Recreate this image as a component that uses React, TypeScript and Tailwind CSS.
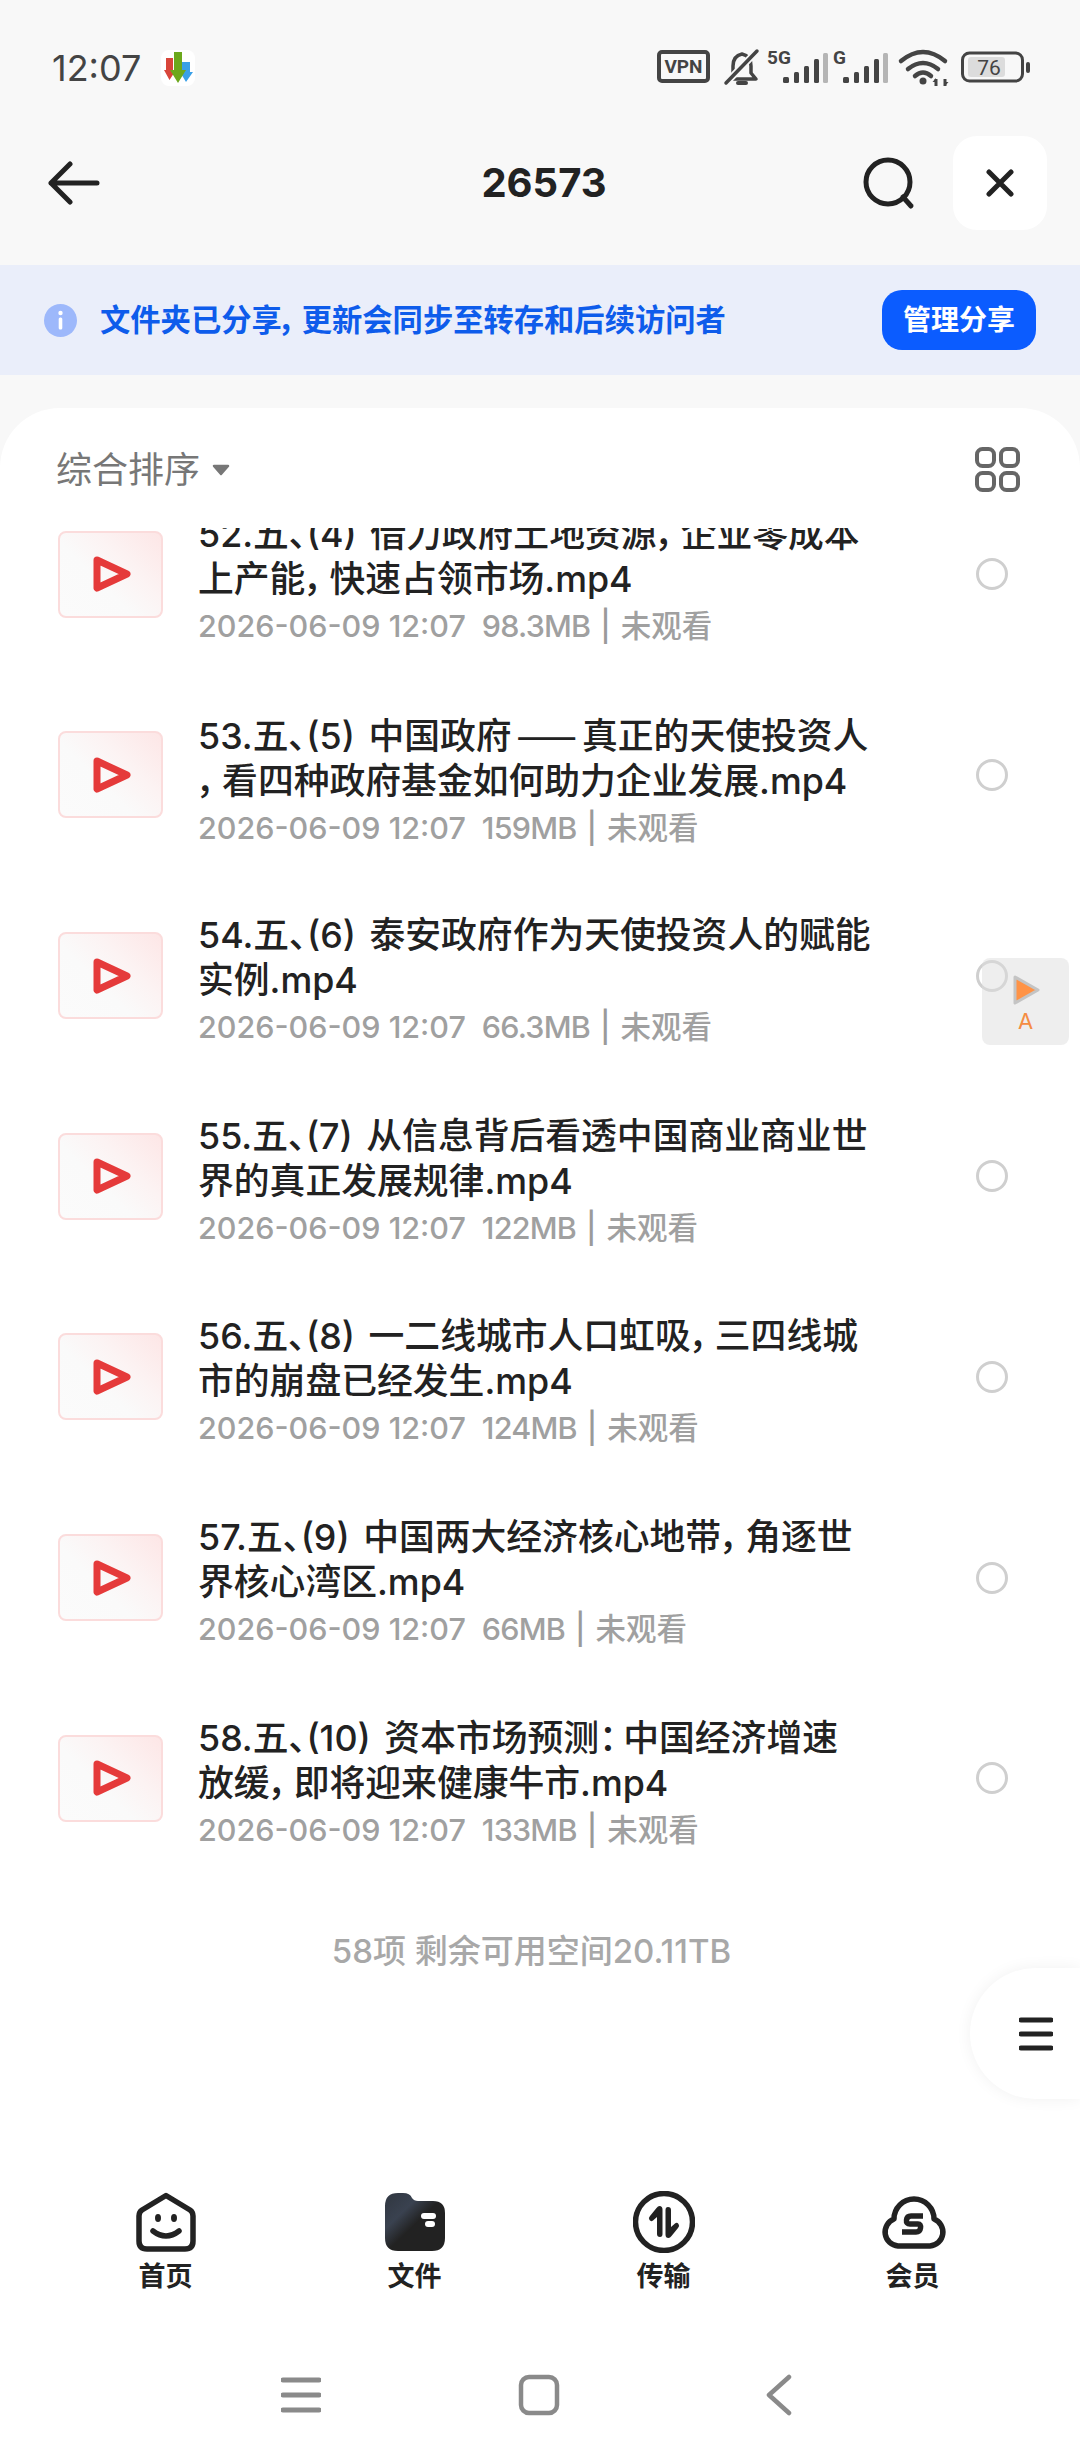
import { Fragment } from "react";

type FileRow = {
  lines: [string, string];
  size: string;
};

const FILES: FileRow[] = [
  { lines: ["52.五、(4) 借力政府土地资源，\u2009企业零成本", "上产能，\u2009快速占领市场.mp4"], size: "98.3MB" },
  { lines: ["53.五、(5) 中国政府——真正的天使投资人", "，\u2009看四种政府基金如何助力企业发展.mp4"], size: "159MB" },
  { lines: ["54.五、(6) 泰安政府作为天使投资人的赋能", "实例.mp4"], size: "66.3MB" },
  { lines: ["55.五、(7) 从信息背后看透中国商业商业世", "界的真正发展规律.mp4"], size: "122MB" },
  { lines: ["56.五、(8) 一二线城市人口虹吸，\u2009三四线城", "市的崩盘已经发生.mp4"], size: "124MB" },
  { lines: ["57.五、(9) 中国两大经济核心地带，\u2009角逐世", "界核心湾区.mp4"], size: "66MB" },
  { lines: ["58.五、(10) 资本市场预测：\u2009中国经济增速", "放缓，\u2009即将迎来健康牛市.mp4"], size: "133MB" },
];

function TitleLine({ text }: { text: string }) {
  // the em dashes have to come from the CJK face to join up
  const parts = text.split("——");
  if (parts.length === 1) return <>{text}</>;
  return (
    <>
      {parts[0]}
      <span className="mx-[5px] font-['Noto_Sans_CJK_SC',sans-serif] [font-feature-settings:normal]">——</span>
      {parts[1]}
    </>
  );
}

function StatusIcons() {
  return (
    <div className="flex items-center text-[#444]">
      <svg width="374" height="56" viewBox="0 -8 374 56" className="block">
        <rect x="2" y="4" width="49" height="29" rx="3" fill="none" stroke="#444" strokeWidth="4" />
        <text x="26.5" y="25" textAnchor="middle" fontSize="19" fontWeight="700" fill="#444" fontFamily="Roboto, sans-serif">VPN</text>
        {/* bell, muted */}
        <path d="M76 28V18Q76 8 85 6Q94 8 94 18V25L99 31H71Z" fill="none" stroke="#444" strokeWidth="3.5" strokeLinejoin="round" />
        <path d="M81 35H89" stroke="#444" strokeWidth="4" strokeLinecap="round" />
        <path d="M69 35L100 3" stroke="#f8f8f8" strokeWidth="7" />
        <path d="M69 35L100 3" stroke="#444" strokeWidth="3.5" strokeLinecap="round" />
        {/* 5G signal */}
        <text x="110" y="16" fontSize="19" fontWeight="700" fill="#444" fontFamily="Roboto, sans-serif">5G</text>
        <rect x="126" y="29" width="6" height="6" rx="1.5" fill="#444" />
        <rect x="137" y="24" width="5" height="11" rx="1.5" fill="#444" />
        <rect x="147" y="18" width="5" height="17" rx="1.5" fill="#444" />
        <rect x="157" y="11" width="5" height="24" rx="1.5" fill="#444" />
        <rect x="166" y="5" width="5" height="30" rx="1.5" fill="#b5b5b5" />
        {/* G signal */}
        <text x="176" y="16" fontSize="19" fontWeight="700" fill="#444" fontFamily="Roboto, sans-serif">G</text>
        <rect x="186" y="29" width="6" height="6" rx="1.5" fill="#444" />
        <rect x="197" y="24" width="5" height="11" rx="1.5" fill="#444" />
        <rect x="207" y="18" width="5" height="17" rx="1.5" fill="#444" />
        <rect x="217" y="11" width="5" height="24" rx="1.5" fill="#444" />
        <rect x="226" y="5" width="5" height="30" rx="1.5" fill="#b5b5b5" />
        {/* wifi */}
        <path d="M244 13Q266 -5 288 13" fill="none" stroke="#444" strokeWidth="4.5" strokeLinecap="round" />
        <path d="M251 21Q266 9 281 21" fill="none" stroke="#444" strokeWidth="4.5" strokeLinecap="round" />
        <path d="M258 28Q266 21 274 28" fill="none" stroke="#444" strokeWidth="4.5" strokeLinecap="round" />
        <circle cx="266" cy="33" r="3.5" fill="#444" />
        <path d="M279 31V38M288 31V38" stroke="#444" strokeWidth="3" />
        <path d="M275.5 34H279V30ZM291.5 34H288V38Z" fill="#444" />
        {/* battery */}
        <rect x="305.5" y="5" width="60" height="28" rx="7" fill="none" stroke="#444" strokeWidth="3" />
        <rect x="311" y="9" width="37" height="20" rx="3" fill="#dcdcdc" />
        <rect x="369" y="14" width="4" height="11" rx="2" fill="#444" />
        <text x="332" y="27" textAnchor="middle" fontSize="21" fill="#444" fontFamily="Roboto, sans-serif">76</text>
      </svg>
    </div>
  );
}

function Thumb() {
  return (
    <div className="flex h-[87px] w-[105px] shrink-0 items-center justify-center rounded-[8px] border-2 border-[#fbdcdc] bg-[linear-gradient(225deg,#fde6e6_0%,#fcf3f3_35%,#fafafa_60%,#fbfbfb_100%)]">
      <svg width="38" height="36" viewBox="0 0 38 36" className="ml-[2px] block">
        <path d="M4 4L34 18L4 32Z" fill="none" stroke="#e53a3a" strokeWidth="7" strokeLinejoin="round" />
      </svg>
    </div>
  );
}

function Row({ file }: { file: FileRow }) {
  return (
    <div className="flex h-[200.67px] items-center pl-[58px]">
      <Thumb />
      <div className="ml-[35px] min-w-0 flex-1 pt-[11px]">
        <p className="whitespace-nowrap text-[35.8px] leading-[45px] font-medium text-[#222] [word-spacing:4px]">
          {file.lines.map((line, i) => (
            <Fragment key={i}>
              <TitleLine text={line} />
              {i === 0 && <br />}
            </Fragment>
          ))}
        </p>
        <p className="mt-[2px] whitespace-nowrap text-[30.5px] leading-[44px] font-medium text-[#a0a0a0]">
          2026-06-09 12:07<span className="ml-[16px] tracking-[-0.8px]">{file.size}</span>
          <span className="mx-[10px] text-[#9a9a9a]">|</span>未观看
        </p>
      </div>
      <div className="mr-[72px] h-[32px] w-[32px] shrink-0 rounded-full border-[3px] border-[#cfcfcf]" />
    </div>
  );
}

function TabItem({ label, icon }: { label: string; icon: React.ReactNode }) {
  return (
    <div className="flex w-[249px] flex-col items-center">
      <div className="flex h-[62px] items-center justify-center">{icon}</div>
      <span className="mt-[6px] text-[27px] leading-[36px] font-bold text-[#222]">{label}</span>
    </div>
  );
}

export default function App() {
  return (
    <div className="relative flex h-[2460px] w-[1080px] flex-col overflow-hidden bg-[#f8f8f8] font-['Inter','Noto_Sans_CJK_SC',sans-serif] [font-feature-settings:'palt']">
      {/* status bar */}
      <div className="flex h-[136px] shrink-0 items-center justify-between pr-[49px] pl-[52px]">
        <div className="flex items-center">
          <span className="text-[36px] leading-none text-[#444]">12:07</span>
          <svg width="34" height="36" viewBox="0 0 34 36" className="ml-[20px] block">
            <rect width="34" height="36" rx="8" fill="#fff" />
            <path d="M5 8H12V20H15L8.5 30L3 20H5Z" fill="#d8453a" />
            <path d="M21 12H29V22H32L25 32L19 22H21Z" fill="#3aa0e8" />
            <path d="M13 2H21V20H25L17 33L9 20H13Z" fill="#6ca81c" />
          </svg>
        </div>
        <StatusIcons />
      </div>

      {/* header */}
      <div className="relative flex h-[94px] shrink-0 items-center justify-between pr-[33px] pl-[48px]">
        <svg width="52" height="46" viewBox="0 0 52 46" className="block">
          <path d="M22 4L3 23L22 42M3 23H49" fill="none" stroke="#222" strokeWidth="5" strokeLinecap="round" strokeLinejoin="round" />
        </svg>
        <span className="absolute left-[4px] w-full text-center text-[40px] leading-none font-bold text-[#222]">26573</span>
        <div className="relative flex items-center gap-[37px]">
          <svg width="54" height="54" viewBox="0 0 54 54" className="block">
            <circle cx="26" cy="26" r="22" fill="none" stroke="#222" strokeWidth="5" />
            <path d="M41 41L49 50" stroke="#222" strokeWidth="5" strokeLinecap="round" />
          </svg>
          <div className="flex h-[94px] w-[94px] items-center justify-center rounded-[24px] bg-white">
            <svg width="28" height="28" viewBox="0 0 28 28" className="block">
              <path d="M3 3L25 25M25 3L3 25" stroke="#222" strokeWidth="5" strokeLinecap="round" />
            </svg>
          </div>
        </div>
      </div>

      {/* shared folder banner */}
      <div className="mt-[35px] flex h-[110px] shrink-0 items-center justify-between bg-[#eaeefa] pr-[44px] pl-[44px]">
        <div className="flex items-center">
          <svg width="33" height="33" viewBox="0 0 33 33" className="block">
            <circle cx="16.5" cy="16.5" r="16.5" fill="#9db8fb" />
            <circle cx="16.5" cy="9" r="2.2" fill="#fff" />
            <rect x="14.7" y="13.5" width="3.6" height="12" rx="1.5" fill="#fff" />
          </svg>
          <span className="ml-[23px] text-[30.3px] leading-none font-bold whitespace-nowrap text-[#0e5ceb]">
            文件夹已分享，{"\u2009"}更新会同步至转存和后续访问者
          </span>
        </div>
        <div className="flex h-[60px] w-[154px] items-center justify-center rounded-[20px] bg-[#0b5cff] text-[28px] font-bold text-white">
          管理分享
        </div>
      </div>

      {/* file panel */}
      <div className="mt-[33px] flex min-h-0 flex-1 flex-col rounded-t-[60px] bg-white">
        <div className="flex h-[120px] shrink-0 items-center justify-between pt-[3px] pr-[60px] pl-[56px]">
          <div className="flex items-center">
            <span className="text-[36px] leading-none text-[#777]">综合排序</span>
            <svg width="20" height="14" viewBox="0 0 20 14" className="ml-[11px] block">
              <path d="M3 3H17L10 11Z" fill="#777" stroke="#777" strokeWidth="2.5" strokeLinejoin="round" />
            </svg>
          </div>
          <svg width="45" height="45" viewBox="0 0 45 45" className="block">
            <rect x="2" y="2" width="17" height="17" rx="5.5" fill="none" stroke="#666" strokeWidth="4" />
            <rect x="26" y="2" width="17" height="17" rx="5.5" fill="none" stroke="#666" strokeWidth="4" />
            <rect x="2" y="26" width="17" height="17" rx="5.5" fill="none" stroke="#666" strokeWidth="4" />
            <rect x="26" y="26" width="17" height="17" rx="5.5" fill="none" stroke="#666" strokeWidth="4" />
          </svg>
        </div>

        <div className="min-h-0 flex-1 overflow-hidden">
          <div className="-mt-[54px]">
            {FILES.map((file) => (
              <Row key={file.lines[0]} file={file} />
            ))}
            <p className="h-[144px] pt-[52px] pr-[17px] text-center text-[33px] leading-[40px] font-medium text-[#a8a8a8]">
              58项 剩余可用空间20.11TB
            </p>
          </div>
        </div>

        {/* tab bar */}
        <div className="flex h-[150px] shrink-0 items-start justify-center pt-[11px] pr-[2px]">
          <TabItem
            label="首页"
            icon={
              <svg width="60" height="60" viewBox="0 0 60 60" className="block">
                <path d="M30 3.5L54 18Q57 20 57 24V49Q57 57 49 57H11Q3 57 3 49V24Q3 20 6 18Z" fill="none" stroke="#222" strokeWidth="5.5" strokeLinejoin="round" />
                <ellipse cx="22" cy="26" rx="3" ry="4" fill="#222" />
                <ellipse cx="38" cy="26" rx="3" ry="4" fill="#222" />
                <path d="M17 39Q30 49 43 39" fill="none" stroke="#222" strokeWidth="5.5" strokeLinecap="round" />
              </svg>
            }
          />
          <TabItem
            label="文件"
            icon={
              <svg width="60" height="58" viewBox="0 0 60 58" className="block">
                <defs>
                  <linearGradient id="folderFill" x1="0.1" y1="0.1" x2="0.7" y2="0.7">
                    <stop offset="0" stopColor="#333a45" />
                    <stop offset="0.35" stopColor="#3a4250" />
                    <stop offset="0.7" stopColor="#222222" />
                  </linearGradient>
                </defs>
                <path d="M13 0H18Q25 0 27 5Q29 8 33 8H48Q60 8 60 20V45Q60 58 47 58H13Q0 58 0 45V13Q0 0 13 0Z" fill="url(#folderFill)" />
                <rect x="36" y="20" width="15" height="6" rx="3" fill="#fff" />
                <rect x="40" y="28" width="10" height="6" rx="3" fill="#fff" />
              </svg>
            }
          />
          <TabItem
            label="传输"
            icon={
              <svg width="62" height="62" viewBox="0 0 62 62" className="block">
                <circle cx="31" cy="31" r="28.5" fill="none" stroke="#222" strokeWidth="5.5" />
                <path d="M26.5 15Q29.5 15 29.5 18.5V43Q29.5 46 27 46Q24 46 24 43V26L20 29.5Q18 31 16.5 29Q15 27 17 25L23.5 17Q25 15 26.5 15Z" fill="#222" />
                <path d="M35.5 47Q32.5 47 32.5 43.5V19Q32.5 16 35 16Q38 16 38 19V36L42 32.5Q44 31 45.5 33Q47 35 45 37L38.5 45Q37 47 35.5 47Z" fill="#222" />
              </svg>
            }
          />
          <TabItem
            label="会员"
            icon={
              <svg width="66" height="56" viewBox="0 0 66 56" className="ml-[2px] block">
                <path d="M17 52H49A14 14 0 0 0 53 25A20 20 0 0 0 13 25A14 14 0 0 0 17 52Z" fill="none" stroke="#222" strokeWidth="5.5" strokeLinejoin="round" />
                <path d="M42 22H30Q26 22 25.5 26Q25 30 29 30H37Q40 30 39.5 34Q39 38 35 38H21" fill="none" stroke="#222" strokeWidth="5.5" />
              </svg>
            }
          />
        </div>

        {/* android nav */}
        <div className="flex h-[130px] shrink-0 items-center pl-[281px]">
          <svg width="40" height="38" viewBox="0 0 40 38" className="block">
            <path d="M2 4H38M2 19H38M2 34H38" stroke="#8a8a8a" strokeWidth="5" strokeLinecap="round" />
          </svg>
          <svg width="42" height="42" viewBox="0 0 42 42" className="ml-[197px] block">
            <rect x="3" y="3" width="36" height="36" rx="8" fill="none" stroke="#8a8a8a" strokeWidth="4.5" />
          </svg>
          <svg width="28" height="42" viewBox="0 0 28 42" className="ml-[205px] block">
            <path d="M24 3L4 21L24 39" fill="none" stroke="#8a8a8a" strokeWidth="4.5" strokeLinecap="round" strokeLinejoin="round" />
          </svg>
        </div>
      </div>

      {/* floating player */}
      <div className="absolute top-[958px] left-[982px] flex h-[87px] w-[87px] flex-col items-center rounded-[8px] bg-[#dedede]/50 pt-[16px]">
        <svg width="30" height="32" viewBox="0 0 30 32" className="block">
          <path d="M4 3L27 16L4 29Z" fill="#ff9346" stroke="#c4c4c4" strokeWidth="3" strokeLinejoin="round" />
        </svg>
        <span className="mt-[2px] text-[22px] leading-[26px] text-[#f58c42]">A</span>
      </div>

      {/* floating menu */}
      <div className="absolute top-[1968px] right-0 flex h-[131px] w-[110px] items-center rounded-l-[66px] bg-white pl-[49px] shadow-[0_0_16px_rgba(0,0,0,0.06)]">
        <svg width="34" height="36" viewBox="0 0 34 36" className="block">
          <path d="M2 4H32M2 18H32M2 32H32" stroke="#222" strokeWidth="5" strokeLinecap="round" />
        </svg>
      </div>
    </div>
  );
}
